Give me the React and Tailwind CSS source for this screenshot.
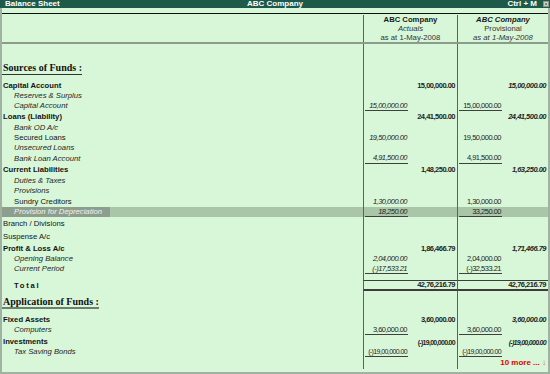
import React from "react";

const LINE = "border-[#56665a]";
const AMT = "text-[7.5px] leading-none tracking-[-0.5px] text-[#1e1e1e] whitespace-nowrap";
const LBL = "text-[7.7px] leading-none text-[#141414] whitespace-nowrap";

const liabilities = [
  { kind: "group", label: "Capital Account", t1: "15,00,000.00", t2: "15,00,000.00", h: "h-[10px]" },
  { kind: "sub", label: "Reserves & Surplus", italic: true, h: "h-[10px]" },
  { kind: "sub", label: "Capital Account", italic: true, s1: "15,00,000.00", s2: "15,00,000.00", ul: true, h: "h-[10px]" },
  { kind: "group", label: "Loans (Liability)", t1: "24,41,500.00", t2: "24,41,500.00", h: "h-[12px]" },
  { kind: "sub", label: "Bank OD A/c", italic: true, h: "h-[10px]" },
  { kind: "sub", label: "Secured Loans", s1: "19,50,000.00", s2: "19,50,000.00", h: "h-[10px]" },
  { kind: "sub", label: "Unsecured Loans", italic: true, h: "h-[10px]" },
  { kind: "sub", label: "Bank Loan Account", italic: true, s1: "4,91,500.00", s2: "4,91,500.00", ul: true, h: "h-[11px]" },
  { kind: "group", label: "Current Liabilities", t1: "1,48,250.00", t2: "1,63,250.00", h: "h-[11px]" },
  { kind: "sub", label: "Duties & Taxes", italic: true, h: "h-[11px]" },
  { kind: "sub", label: "Provisions", italic: true, h: "h-[10px]" },
  { kind: "sub", label: "Sundry Creditors", s1: "1,30,000.00", s2: "1,30,000.00", h: "h-[11px]" },
  { kind: "sub", label: "Provision for Depreciation", italic: true, s1: "18,250.00", s2: "33,250.00", ul: true, hl: true, h: "h-[10px]" },
  { kind: "plain", label: "Branch / Divisions", h: "h-[13px]" },
  { kind: "plain", label: "Suspense A/c", h: "h-[13px]" },
  { kind: "group", label: "Profit & Loss A/c", t1: "1,86,466.79", t2: "1,71,466.79", h: "h-[11px]" },
  { kind: "sub", label: "Opening Balance", italic: true, s1: "2,04,000.00", s2: "2,04,000.00", h: "h-[10px]" },
  { kind: "sub", label: "Current Period", italic: true, s1: "(-)17,533.21", s2: "(-)32,533.21", ul: true, h: "h-[10px]" },
];

const assets = [
  { kind: "group", label: "Fixed Assets", t1: "3,60,000.00", t2: "3,60,000.00", h: "h-[10px]" },
  { kind: "sub", label: "Computers", italic: true, s1: "3,60,000.00", s2: "3,60,000.00", ul: true, upright: true, h: "h-[10px]" },
  { kind: "space", h: "h-[2px]" },
  { kind: "group", label: "Investments", t1: "(-)19,00,000.00", t2: "(-)19,00,000.00", tight: true, h: "h-[10px]" },
  { kind: "sub", label: "Tax Saving Bonds", italic: true, s1: "(-)19,00,000.00", s2: "(-)19,00,000.00", ul: true, upright: true, tight: true, h: "h-[10px]" },
];

function AmtCol({ width, sub, total, ul, subItalic, totalItalic, tight, totalRow }) {
  return (
    <div
      className={`${width} h-full border-l ${LINE} flex pl-[1px] pr-[2px] ${
        totalRow ? "border-t border-b-2 border-t-[#3c3c3c] border-b-[#3c3c3c]" : ""
      }`}
    >
      <div
        className={`w-[43px] h-full flex items-center justify-end pr-[1px] ${
          ul ? "border-b border-[#3f3f3f]" : ""
        }`}
      >
        {sub && (
          <span className={`${AMT} ${subItalic ? "italic" : ""} ${tight ? "text-[7px] tracking-[-0.6px]" : ""}`}>
            {sub}
          </span>
        )}
      </div>
      <div className="flex-1 h-full flex items-center justify-end">
        {total && (
          <span
            className={`${AMT} font-bold ${totalItalic ? "italic" : ""} ${
              tight ? "text-[7px] tracking-[-0.7px]" : ""
            }`}
          >
            {total}
          </span>
        )}
      </div>
    </div>
  );
}

function Row({ r }) {
  if (r.kind === "space") return <Blank h={r.h} />;
  let label;
  if (r.hl) {
    label = (
      <span className={`${LBL} h-full w-[108px] bg-[#8e9e8e] text-[#eef4ee] italic pl-[12px] flex items-center`}>
        {r.label}
      </span>
    );
  } else if (r.kind === "group") {
    label = <span className={`${LBL} font-bold pl-[1px]`}>{r.label}</span>;
  } else if (r.kind === "plain") {
    label = <span className={`${LBL} pl-[1px]`}>{r.label}</span>;
  } else {
    label = <span className={`${LBL} pl-[12px] ${r.italic ? "italic text-[#262626]" : ""}`}>{r.label}</span>;
  }
  return (
    <div className={`flex shrink-0 ${r.h} ${r.hl ? "bg-[#a9c6a9]" : ""}`}>
      <div className="w-[361px] h-full flex items-center">{label}</div>
      <AmtCol width="w-[94px]" sub={r.s1} total={r.t1} ul={r.ul} subItalic={!r.upright} tight={r.tight} />
      <AmtCol width="w-[91px]" sub={r.s2} total={r.t2} ul={r.ul} totalItalic tight={r.tight} />
    </div>
  );
}

function Blank({ h }) {
  return (
    <div className={`flex shrink-0 ${h}`}>
      <div className="w-[361px]" />
      <div className={`w-[94px] border-l ${LINE}`} />
      <div className={`w-[91px] border-l ${LINE}`} />
    </div>
  );
}

function Heading({ text, thick }) {
  return (
    <div className="flex shrink-0 h-[13px]">
      <div className="w-[361px] h-full flex items-start">
        <span
          className={`block font-['Liberation_Serif','Times_New_Roman',serif] font-bold text-[10px] text-[#111] pl-[1px] ${
            thick ? "leading-[11px] border-b-2 border-[#6f7f6f]" : "leading-[12px] border-b border-[#333]"
          }`}
        >
          {text}
        </span>
      </div>
      <div className={`w-[94px] border-l ${LINE}`} />
      <div className={`w-[91px] border-l ${LINE}`} />
    </div>
  );
}

export default function App() {
  return (
    <div className="w-[550px] h-[374px] bg-[#d8f6d8] font-['Liberation_Sans',Arial,sans-serif] overflow-hidden flex flex-col">
      <div className="h-[8px] shrink-0 bg-[#1e5a49] grid grid-cols-3 items-center text-white font-bold text-[8px] leading-[8px]">
        <span className="pl-[5px]">Balance Sheet</span>
        <span className="text-center">ABC Company</span>
        <span className="flex justify-end items-center gap-[6px] pr-[1px]">
          <span>Ctrl + M</span>
          <span className="w-[6px] h-[6px] bg-[#cfd8cf] border border-[#8a948a] text-[#444] text-[6px] leading-[4px] flex items-center justify-center font-normal">
            ×
          </span>
        </span>
      </div>

      <div className="flex-1 flex flex-col border-l-2 border-r-2 border-b-2 border-[#a2b2a2]">
        <div className="h-[5px] shrink-0" />
        <div className="h-[1px] shrink-0 bg-[#111]" />
        <div className="flex shrink-0 h-[28px] pt-[1px]">
          <div className="w-[361px]" />
          <div className={`w-[94px] border-l ${LINE} flex flex-col items-center text-[7.7px] leading-[9px] text-[#1a1a1a]`}>
            <span className="font-bold">ABC Company</span>
            <span className="italic text-[#333]">Actuals</span>
            <span className="text-[#333]">as at 1-May-2008</span>
          </div>
          <div className={`w-[91px] border-l ${LINE} flex flex-col items-center text-[7.7px] leading-[9px] text-[#1a1a1a]`}>
            <span className="font-bold italic">ABC Company</span>
            <span className="text-[#333]">Provisional</span>
            <span className="italic text-[#333]">as at 1-May-2008</span>
          </div>
        </div>
        <div className="h-[2px] shrink-0 bg-[#8c9c8c]" />

        <Blank h="h-[18px]" />
        <Heading text="Sources of Funds :" />
        <Blank h="h-[6px]" />
        {liabilities.map((r, i) => (
          <Row key={i} r={r} />
        ))}
        <Blank h="h-[6px]" />

        <div className="flex shrink-0 h-[11px]">
          <div className="w-[361px] h-full flex items-center">
            <span className={`${LBL} font-bold pl-[12px] tracking-[1.7px]`}>Total</span>
          </div>
          <AmtCol width="w-[94px]" total="42,76,216.79" totalRow />
          <AmtCol width="w-[91px]" total="42,76,216.79" totalRow />
        </div>

        <Blank h="h-[5px]" />
        <Heading text="Application of Funds :" thick />
        <Blank h="h-[6px]" />
        {assets.map((r, i) => (
          <Row key={i} r={r} />
        ))}

        <div className="flex shrink-0 h-[12px]">
          <div className="w-[361px]" />
          <div className={`w-[94px] border-l ${LINE}`} />
          <div className={`w-[91px] border-l ${LINE} flex items-center justify-end pr-[2px]`}>
            <span className="text-[8px] leading-none font-bold text-[#e00000] whitespace-nowrap">
              10 more ... <span className="font-normal text-[#d05050]">↓</span>
            </span>
          </div>
        </div>
        <div className="flex-1" />
      </div>
    </div>
  );
}
